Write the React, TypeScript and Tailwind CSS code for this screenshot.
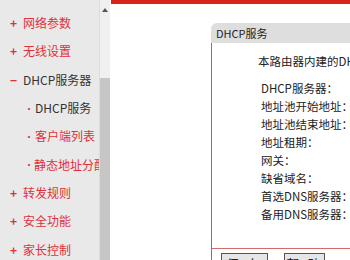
import React from 'react';

const font = { fontFamily: '"SimSun", "Noto Sans CJK SC", "Liberation Sans", sans-serif' };

type NavItem = { label: string; level: 0 | 1; open?: boolean; active?: boolean };

const nav: NavItem[] = [
  { label: '网络参数', level: 0 },
  { label: '无线设置', level: 0 },
  { label: 'DHCP服务器', level: 0, open: true },
  { label: 'DHCP服务', level: 1, active: true },
  { label: '客户端列表', level: 1 },
  { label: '静态地址分配', level: 1 },
  { label: '转发规则', level: 0 },
  { label: '安全功能', level: 0 },
  { label: '家长控制', level: 0 },
];

const fields = [
  'DHCP服务器：',
  '地址池开始地址：',
  '地址池结束地址：',
  '地址租期：',
  '网关：',
  '缺省域名：',
  '首选DNS服务器：',
  '备用DNS服务器：',
];

function Sidebar() {
  return (
    <div className="w-[99px] shrink-0 bg-[#e9e9e9] pt-[9px] overflow-hidden">
      {nav.map((item) => (
        <div
          key={item.label}
          className={`h-[28.3px] flex items-center whitespace-nowrap text-[12px] ${
            item.level === 0 ? 'pl-[10px]' : 'pl-[24px]'
          } ${item.open || item.active ? 'text-[#333]' : 'text-[#e0303a]'}`}
        >
          {item.level === 0 ? (
            <span className={`w-[13px] text-[12px] font-bold ${item.open ? 'text-[#e0303a]' : ''}`}>
              {item.open ? '−' : '+'}
            </span>
          ) : (
            <span className="w-[11px] text-[10px] text-[#e0303a]">•</span>
          )}
          <span>{item.label}</span>
        </div>
      ))}
    </div>
  );
}

function Scrollbar() {
  return (
    <div className="w-[11px] shrink-0 bg-[#f0f0f0] flex flex-col border-l border-[#dcdcdc]">
      <div className="h-[78px] flex justify-center pt-[8px]">
        <svg width="6" height="4" viewBox="0 0 6 4">
          <path d="M3 0L6 4H0Z" fill="#555" />
        </svg>
      </div>
      <div className="flex-1 bg-[#c6c6c6]" />
    </div>
  );
}

function Panel() {
  return (
    <div className="ml-[101px] mt-[19px] w-[300px]">
      <div className="h-[20px] bg-[#dedede] rounded-tl-[6px] flex items-center pl-[5px] text-[11px] text-[#222]">
        DHCP服务
      </div>
      <div className="border-l border-[#c85a5a] bg-white">
        <div className="pl-[46px] pt-[10px] text-[11.5px] text-[#222] whitespace-nowrap">
          本路由器内建的DHCP服务器能自动配置局域网中各计算机的TCP/IP协议。
        </div>
        <div className="pl-[49px] pt-[9px] flex flex-col text-[11.5px] text-[#222]">
          {fields.map((f) => (
            <div key={f} className="h-[18px] flex items-center whitespace-nowrap">
              {f}
            </div>
          ))}
        </div>
        <div className="h-[25px]" />
        <div className="border-t border-[#d46a6a] pt-[4px] pl-[9px] flex gap-[16px]">
          <button className="w-[47px] h-[20px] bg-[#e6e6e6] border border-[#555] text-[13px] text-[#222] leading-none tracking-[0.2em]">
            保 存
          </button>
          <button className="w-[41px] h-[20px] bg-[#e6e6e6] border border-[#555] text-[13px] text-[#222] leading-none tracking-[0.2em]">
            帮 助
          </button>
        </div>
      </div>
    </div>
  );
}

export default function App() {
  return (
    <div className="w-[350px] h-[260px] overflow-hidden flex bg-white" style={font}>
      <Sidebar />
      <Scrollbar />
      <div className="flex-1 min-w-0 overflow-hidden">
        <div className="h-[4px] bg-[#d8231d] ml-[1px]" />
        <Panel />
      </div>
    </div>
  );
}
